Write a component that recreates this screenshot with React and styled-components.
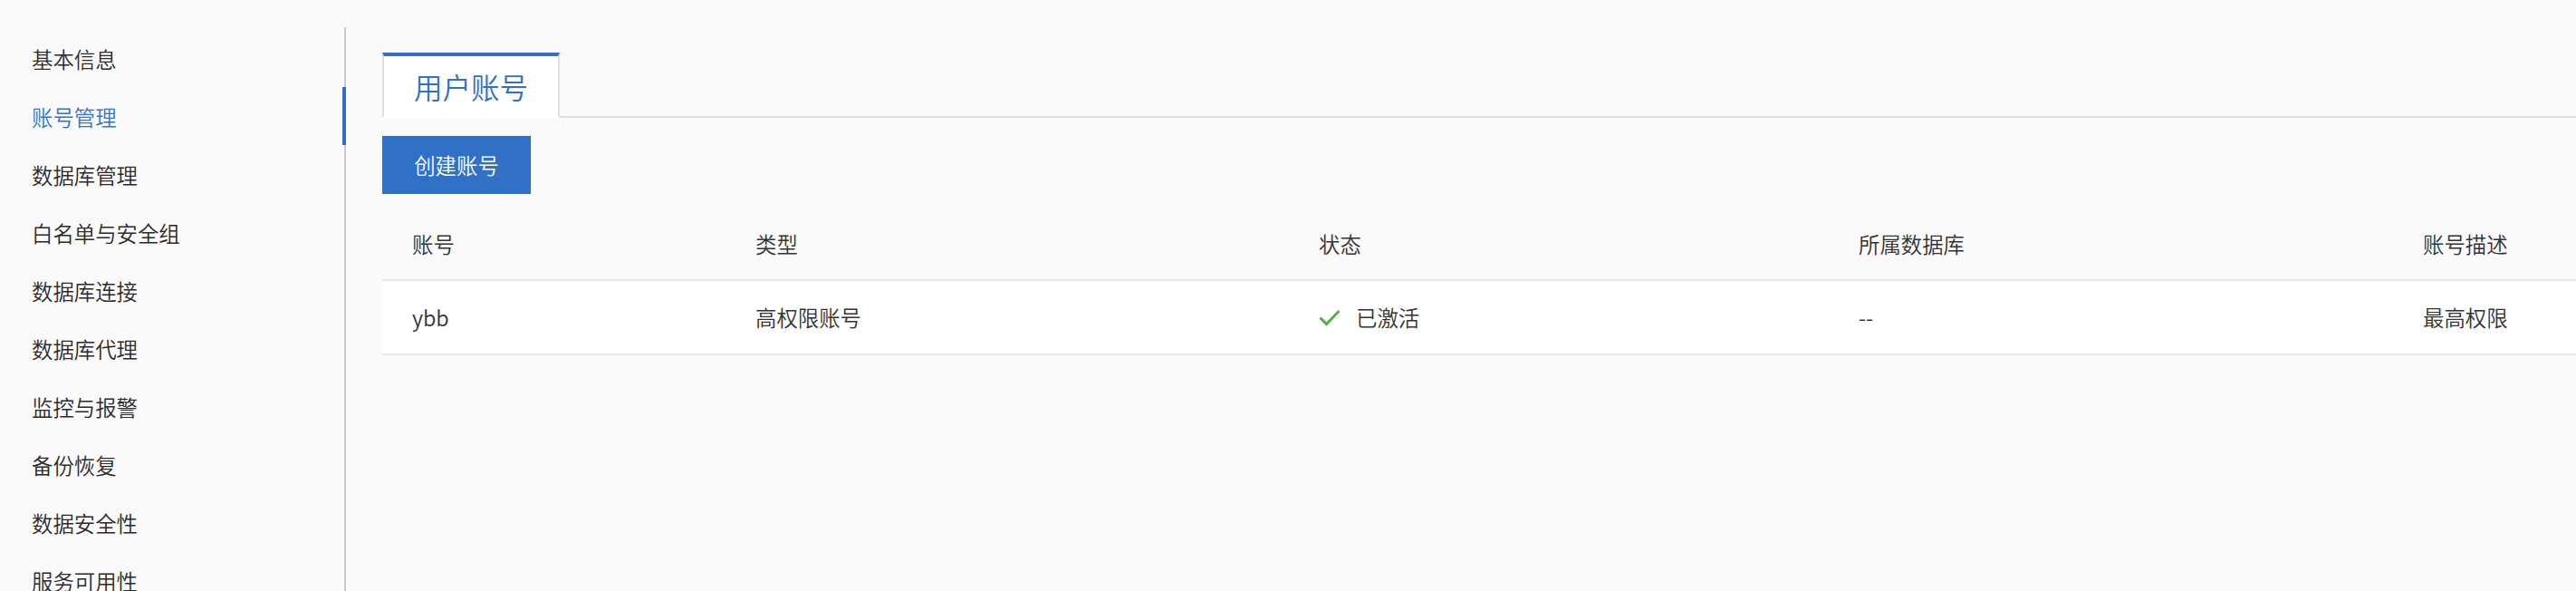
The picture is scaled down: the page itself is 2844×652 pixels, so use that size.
import React from "react";
import styled, { createGlobalStyle } from "styled-components";

const GlobalStyle = createGlobalStyle`
  html, body {
    margin: 0;
    padding: 0;
    background: #fafafa;
    font-family: "Noto Sans CJK SC", "Noto Sans", sans-serif;
    font-weight: 350;
    color: #333;
  }
`;

const menus = [
  "基本信息",
  "账号管理",
  "数据库管理",
  "白名单与安全组",
  "数据库连接",
  "数据库代理",
  "监控与报警",
  "备份恢复",
  "数据安全性",
  "服务可用性",
];

const columns = ["账号", "类型", "状态", "所属数据库", "账号描述"];

const accounts = [
  { name: "ybb", type: "高权限账号", status: "已激活", db: "--", desc: "最高权限" },
];

const CheckIcon = () => (
  <svg width="24" height="19" viewBox="0 0 24 19">
    <polyline
      points="1.5,9.5 8.5,16.5 22.5,2"
      fill="none"
      stroke="#4fb43f"
      strokeWidth="3"
    />
  </svg>
);

const App = () => {
  const active = 1;

  return (
    <Page>
      <GlobalStyle />
      <Sidebar>
        {menus.map((m, idx) => (
          <MenuItem key={idx} active={idx === active}>
            {m}
          </MenuItem>
        ))}
      </Sidebar>
      <Main>
        <TabBar>
          <Tab>用户账号</Tab>
        </TabBar>
        <CreateButton>创建账号</CreateButton>
        <Table>
          <HeadRow>
            {columns.map((c) => (
              <Cell key={c}>{c}</Cell>
            ))}
          </HeadRow>
          {accounts.map((a) => (
            <BodyRow key={a.name}>
              <Cell>{a.name}</Cell>
              <Cell>{a.type}</Cell>
              <Cell>
                <Status>
                  <CheckIcon />
                  {a.status}
                </Status>
              </Cell>
              <Cell>{a.db}</Cell>
              <Cell>{a.desc}</Cell>
            </BodyRow>
          ))}
        </Table>
      </Main>
    </Page>
  );
};

export default App;

const Page = styled.div`
  display: flex;
  height: 652px;
  overflow: hidden;
`;

const Sidebar = styled.nav`
  width: 380px;
  flex-shrink: 0;
  margin-top: 30px;
  padding-top: 2px;
  border-right: 2px solid #c9ccd2;
`;

const MenuItem = styled.div`
  position: relative;
  height: 64px;
  display: flex;
  align-items: center;
  padding: 2px 0 0 35px;
  box-sizing: border-box;
  font-size: 23.4px;
  color: ${(p) => (p.active ? "#3474cc" : "#2b2b2b")};

  &::after {
    content: "";
    display: ${(p) => (p.active ? "block" : "none")};
    position: absolute;
    top: 0;
    right: -2px;
    width: 4px;
    height: 64px;
    background: #3070c6;
  }
`;

const Main = styled.div`
  flex: 1;
  min-width: 0;
  padding: 58px 0 0 40px;
`;

const TabBar = styled.div`
  display: flex;
  border-bottom: 2px solid #dddddd;
`;

const Tab = styled.div`
  width: 192px;
  height: 66px;
  margin-bottom: -2px;
  display: flex;
  align-items: center;
  justify-content: center;
  background: #fff;
  border-top: 4px solid #3070c6;
  border-left: 2px solid #dddddd;
  border-right: 2px solid #dddddd;
  border-bottom: 2px solid #fff;
  font-size: 31.5px;
  color: #3070c6;
`;

const CreateButton = styled.button`
  margin-top: 20px;
  width: 164px;
  height: 64px;
  border: none;
  background: #3070c6;
  color: #fff;
  font-family: inherit;
  font-weight: inherit;
  font-size: 23.4px;
  cursor: pointer;
`;

const Table = styled.div`
  margin-top: 16px;
`;

const HeadRow = styled.div`
  display: grid;
  grid-template-columns: 379px 622px 596px 623px 1fr;
  height: 78px;
  align-items: center;
  border-bottom: 2px solid #e8e8e8;
`;

const BodyRow = styled(HeadRow)`
  height: 80px;
  background: #fff;
`;

const Cell = styled.div`
  padding-left: 33px;
  font-size: 23.4px;
  color: #333;
  white-space: nowrap;
`;

const Status = styled.span`
  display: inline-flex;
  align-items: center;
  gap: 17px;
`;
